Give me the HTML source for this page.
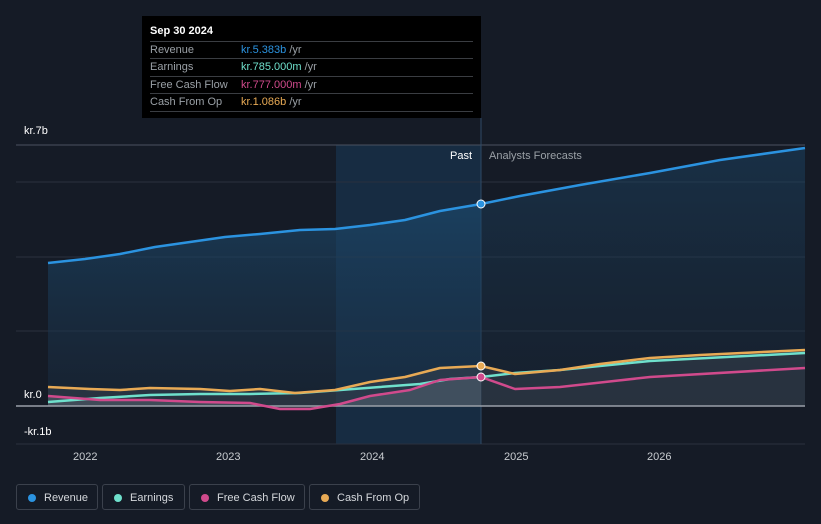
<!DOCTYPE html><html><head><style>
body{margin:0;background:#151b26;width:821px;height:524px;overflow:hidden;font-family:"Liberation Sans",sans-serif;position:relative}
.t{position:absolute;font-size:11px;color:#fff}
.tip{position:absolute;left:142px;top:16px;width:339px;height:102px;background:#000}
.tip .h{position:absolute;left:8px;top:9px;font-size:11px;color:#fff;font-weight:bold}
.row{position:absolute;left:8px;width:323px;height:17px;border-top:1px solid #3a3d42;font-size:11px;color:#9aa0a6;line-height:17px}
.row b{position:absolute;left:91px;font-weight:normal}
.leg{position:absolute;top:484px;height:26px;border:1px solid #3b414c;border-radius:3px;font-size:11px;color:#d5d8dc;line-height:26px;box-sizing:border-box}
.leg i{position:absolute;left:11px;top:9px;width:8px;height:8px;border-radius:50%}
.leg span{position:absolute;left:27px}
</style></head><body>
<svg width="821" height="524" style="position:absolute;left:0;top:0">
<defs><linearGradient id="g" x1="0" y1="0" x2="0" y2="1"><stop offset="0" stop-color="#1c4a6e" stop-opacity=".8"/><stop offset="1" stop-color="#1a2c40" stop-opacity=".5"/></linearGradient></defs>
<rect x="336" y="145" width="145" height="299" fill="#172c42"/>
<line x1="16" y1="145" x2="805" y2="145" stroke="#4a5260"/>
<line x1="16" y1="182" x2="805" y2="182" stroke="#2a313d"/>
<line x1="16" y1="257" x2="805" y2="257" stroke="#2a313d"/>
<line x1="16" y1="331" x2="805" y2="331" stroke="#2a313d"/>
<line x1="16" y1="444" x2="805" y2="444" stroke="#2a313d"/>
<line x1="481" y1="118" x2="481" y2="444" stroke="#2e4a66"/>
<path d="M48,263 L85,259 120,254 155,247 190,242 225,237 260,234 300,230 335,229 370,225 405,220 440,211 481,204 L481,406 L48,406Z" fill="url(#g)" opacity=".8"/>
<path d="M481,204 520,196 580,185 650,173 720,160 805,148 L805,406 L481,406Z" fill="url(#g)" opacity=".55"/>
<path d="M48,387 90,389 120,390 150,388 200,389 230,391 260,389 295,393 335,390 370,382 405,377 440,368 481,366 515,374 560,370 600,364 650,358 700,355 805,350 L805,406 48,406Z" fill="#3a4450" opacity=".5"/>
<path d="M48,396 100,400 150,400 200,402 250,403 280,409 310,409 340,404 370,396 410,390 440,380 481,377 L481,406 48,406Z" fill="#8892a0" opacity=".25"/>
<line x1="16" y1="406" x2="805" y2="406" stroke="#9aa0a8" stroke-width="1.5"/>
<g fill="none" stroke-width="2.5" stroke-linejoin="round">
<path d="M48,263 L85,259 120,254 155,247 190,242 225,237 260,234 300,230 335,229 370,225 405,220 440,211 481,204 520,196 580,185 650,173 720,160 805,148" stroke="#2b93e0"/>
<path d="M48,402 100,398 150,395 200,394 250,394 300,393 340,390 380,387 420,384 450,379 481,377 515,373 560,370 650,361 805,353" stroke="#6fe0cc"/>
<path d="M48,396 100,400 150,400 200,402 250,403 280,409 310,409 340,404 370,396 410,390 440,380 481,377 515,389 560,387 650,377 805,368" stroke="#d04a8c"/>
<path d="M48,387 90,389 120,390 150,388 200,389 230,391 260,389 295,393 335,390 370,382 405,377 440,368 481,366 515,374 560,370 600,364 650,358 700,355 805,350" stroke="#e8aa55"/>
</g>
<circle cx="481" cy="204" r="4" fill="#2b93e0" stroke="#fff"/>
<circle cx="481" cy="366" r="4" fill="#e8aa55" stroke="#fff"/>
<circle cx="481" cy="377" r="4" fill="#d04a8c" stroke="#fff"/>
</svg>
<div class="t" style="left:24px;top:125px">kr.7b</div>
<div class="t" style="left:24px;top:389px">kr.0</div>
<div class="t" style="left:24px;top:426px">-kr.1b</div>
<div class="t" style="left:450px;top:150px">Past</div>
<div class="t" style="left:489px;top:150px;color:#9aa0a6">Analysts Forecasts</div>
<div class="t" style="left:73px;top:451px;color:#c8ccd0">2022</div>
<div class="t" style="left:216px;top:451px;color:#c8ccd0">2023</div>
<div class="t" style="left:360px;top:451px;color:#c8ccd0">2024</div>
<div class="t" style="left:504px;top:451px;color:#c8ccd0">2025</div>
<div class="t" style="left:647px;top:451px;color:#c8ccd0">2026</div>
<div class="tip"><div class="h">Sep 30 2024</div>
<div class="row" style="top:25px">Revenue<b style="color:#2b93e0">kr.5.383b <span style="color:#9aa0a6">/yr</span></b></div>
<div class="row" style="top:42px">Earnings<b style="color:#6fe0cc">kr.785.000m <span style="color:#9aa0a6">/yr</span></b></div>
<div class="row" style="top:60px">Free Cash Flow<b style="color:#d04a8c">kr.777.000m <span style="color:#9aa0a6">/yr</span></b></div>
<div class="row" style="top:77px;border-bottom:1px solid #3a3d42">Cash From Op<b style="color:#e8aa55">kr.1.086b <span style="color:#9aa0a6">/yr</span></b></div>
</div>
<div class="leg" style="left:16px;width:82px"><i style="background:#2b93e0"></i><span>Revenue</span></div>
<div class="leg" style="left:102px;width:83px"><i style="background:#6fe0cc"></i><span>Earnings</span></div>
<div class="leg" style="left:189px;width:116px"><i style="background:#d04a8c"></i><span>Free Cash Flow</span></div>
<div class="leg" style="left:309px;width:111px"><i style="background:#e8aa55"></i><span>Cash From Op</span></div>
</body></html>
